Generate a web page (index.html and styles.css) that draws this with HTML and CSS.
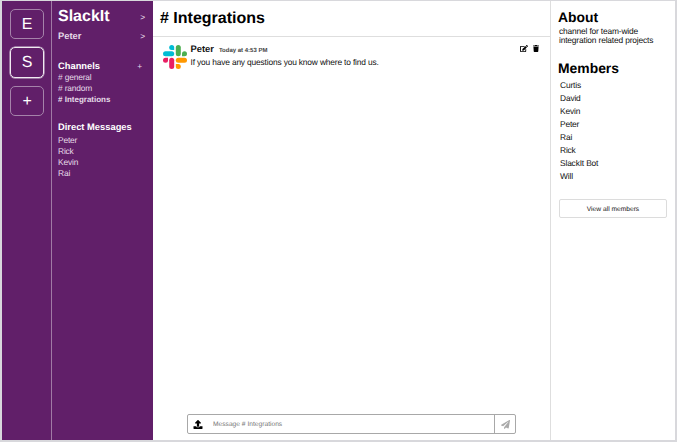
FILE: index.html
```html
<!DOCTYPE html>
<html lang="en">
<head>
<meta charset="utf-8">
<title>SlackIt</title>
<link rel="stylesheet" href="styles.css">
</head>
<body>
<div class="app">
  <nav class="workspaces">
    <div class="workspace">E</div>
    <div class="workspace active">S</div>
    <div class="workspace add">+</div>
  </nav>
  <aside class="sidebar">
    <div class="row team"><h1>SlackIt</h1><span>&gt;</span></div>
    <div class="row user"><h2>Peter</h2><span>&gt;</span></div>
    <div class="row channels-title"><h2>Channels</h2><span>+</span></div>
    <ul class="channels">
      <li># general</li>
      <li># random</li>
      <li class="current"># Integrations</li>
    </ul>
    <h2 class="dm-title">Direct Messages</h2>
    <ul class="dms">
      <li>Peter</li>
      <li>Rick</li>
      <li>Kevin</li>
      <li>Rai</li>
    </ul>
  </aside>
  <main class="chat">
    <header class="chat-header"><h1># Integrations</h1></header>
    <section class="messages">
      <article class="message">
        <svg class="avatar" viewBox="0 0 24 24">
          <g fill="#00bcd4"><rect x="0" y="6.200" width="11.200" height="5" rx="2.500"/><path d="M11.200 5H8.700A2.500 2.500 0 1 1 11.200 2.500Z"/></g>
          <g fill="#4caf50"><rect x="12.800" y="0" width="5" height="11.200" rx="2.500"/><path d="M19 11.200V8.700A2.500 2.500 0 1 1 21.500 11.200Z"/></g>
          <g fill="#ff9800"><rect x="12.800" y="12.800" width="11.200" height="5" rx="2.500"/><path d="M12.800 19h2.500A2.500 2.500 0 1 1 12.800 21.500Z"/></g>
          <g fill="#e91e63"><rect x="6.200" y="12.800" width="5" height="11.200" rx="2.500"/><path d="M5 12.800V15.300A2.500 2.500 0 1 1 2.500 12.800Z"/></g>
        </svg>
        <div class="message-body">
          <div class="byline"><b>Peter</b><time>Today at 4:53 PM</time></div>
          <p>If you have any questions you know where to find us.</p>
        </div>
        <div class="actions">
          <svg class="edit" viewBox="0 0 576 512"><path d="M402.600 83.200l90.200 90.200c3.800 3.800 3.800 10 0 13.800L274.400 405.600l-92.800 10.300c-12.400 1.400-22.900-9.100-21.500-21.500l10.300-92.800L388.800 83.200c3.800-3.800 10-3.800 13.800 0zm162-22.900l-48.800-48.800c-15.200-15.200-39.900-15.200-55.200 0l-35.400 35.400c-3.800 3.800-3.800 10 0 13.800l90.200 90.200c3.800 3.800 10 3.800 13.800 0l35.400-35.400c15.200-15.300 15.200-40 0-55.200zM384 346.200V448H64V128h229.800c3.200 0 6.200-1.300 8.500-3.500l40-40c7.600-7.600 2.200-20.500-8.500-20.500H48C21.500 64 0 85.500 0 112v352c0 26.500 21.500 48 48 48h352c26.500 0 48-21.500 48-48V306.200c0-10.700-12.900-16-20.500-8.500l-40 40c-2.200 2.300-3.500 5.300-3.500 8.500z"/></svg>
          <svg class="trash" viewBox="0 0 448 512"><path d="M432 32H312l-9.400-18.700A24 24 0 0 0 281.100 0H166.800a24 24 0 0 0-21.400 13.300L136 32H16A16 16 0 0 0 0 48v32a16 16 0 0 0 16 16h416a16 16 0 0 0 16-16V48a16 16 0 0 0-16-16zM53.200 467a48 48 0 0 0 47.900 45h245.800a48 48 0 0 0 47.900-45L416 128H32z"/></svg>
        </div>
      </article>
    </section>
    <form class="composer">
      <svg class="upload" viewBox="0 0 512 512"><path d="M296 384h-80c-13.300 0-24-10.700-24-24V192h-87.700c-17.800 0-26.700-21.500-14.100-34.100L242.300 5.700c7.500-7.500 19.800-7.500 27.300 0l152.200 152.200c12.600 12.600 3.700 34.100-14.100 34.100H320v168c0 13.300-10.700 24-24 24zm216-8v112c0 13.300-10.700 24-24 24H24c-13.300 0-24-10.700-24-24V376c0-13.300 10.700-24 24-24h136v8c0 30.900 25.100 56 56 56h80c30.900 0 56-25.100 56-56v-8h136c13.300 0 24 10.700 24 24z"/></svg>
      <input type="text" placeholder="Message # Integrations">
      <div class="send"><svg viewBox="0 0 512 512"><path d="M476 3.200L12.500 270.600c-18.100 10.400-15.800 35.600 2.200 43.200L121 358.400l287.300-253.200c5.500-4.900 13.300 2.600 8.600 8.300L176 407v80.500c0 23.600 28.500 32.900 42.500 15.800L282 426l124.600 52.200c14.200 6 30.400-2.900 33-18.200l72-432C515 7.800 493.300-6.800 476 3.200z"/></svg></div>
    </form>
  </main>
  <aside class="details">
    <h2>About</h2>
    <p>channel for team-wide<br>integration related projects</p>
    <h2 class="members-title">Members</h2>
    <ul class="members">
      <li>Curtis</li>
      <li>David</li>
      <li>Kevin</li>
      <li>Peter</li>
      <li>Rai</li>
      <li>Rick</li>
      <li>SlackIt Bot</li>
      <li>Will</li>
    </ul>
    <button type="button">View all members</button>
  </aside>
</div>
</body>
</html>
```
FILE: styles.css
```css
* { box-sizing: border-box; margin: 0; padding: 0; }
body {
  height: 442px;
  padding: 1px 2px 2px;
  background: #d8d8dc;
  font-family: "Liberation Sans", Arial, sans-serif;
  font-size: 8.400px;
  letter-spacing: -0.160px;
  text-rendering: geometricPrecision;
  color: #111;
  overflow: hidden;
}
ul { list-style: none; }
.app {
  display: grid;
  grid-template-columns: 49px 102px 397px 1fr;
  height: 439px;
  background: #fff;
}
.workspaces {
  display: flex;
  flex-direction: column;
  align-items: center;
  gap: 8px;
  padding: 8px 0 0 1px;
  background: #611f69;
  color: #fff;
}
.workspace {
  width: 34px;
  height: 30px;
  border: 1px solid #a583aa;
  border-radius: 5px;
  font-size: 16px;
  line-height: 29px;
  text-align: center;
}
.workspace.active { height: 31px; border: 1px solid #f0eaf1; box-shadow: 0 0 0 0.500px #d8cbdb; line-height: 29px; }
.sidebar {
  padding: 7px 8px 0 6px;
  border-left: 1px solid #a07aa5;
  background: #611f69;
  color: #e6dbe8;
}
.sidebar h1, .sidebar h2 { color: #fff; }
h1 { font-size: 16px; line-height: 18px; letter-spacing: 0; }
.sidebar h2 { font-size: 9.350px; line-height: 12px; letter-spacing: 0; }
.row { display: flex; justify-content: space-between; align-items: center; }
.sidebar .user { margin-top: 4px; }
.sidebar .user h2 { color: #e6dbe8; }
.channels-title { margin-top: 18px; }
.channels-title span { margin-right: 3px; }
.channels li, .dms li { line-height: 11px; }
.channels .current { font-size: 8px; letter-spacing: 0; font-weight: bold; }
.dm-title { margin-top: 16px; }
.dms { margin-top: 2px; }
.chat { display: flex; flex-direction: column; }
.chat-header {
  height: 36px;
  padding: 9px 7px 0;
  border-bottom: 1px solid #dedede;
  color: #000;
}
.messages { flex: 1; padding: 8px 11px 0 9.500px; }
.message { display: flex; }
.avatar { width: 24px; height: 24px; }
.message-body { flex: 1; padding-left: 4px; margin-top: -1px; }
.byline { display: flex; align-items: baseline; gap: 5px; font-size: 9.350px; line-height: 11px; letter-spacing: 0; }
.byline time { font-size: 6px; font-weight: bold; color: #444; }
.message p { line-height: 11px; }
.actions { display: flex; gap: 5px; }
.edit { width: 8px; height: 7px; }
.trash { width: 6px; height: 7px; }
.composer {
  display: flex;
  align-items: center;
  width: 329px;
  height: 20px;
  margin: 0 0 6px 34px;
  border: 1px solid #a8a8a8;
  border-radius: 2px;
}
.upload { width: 10px; height: 9px; margin-left: 5px; }
.composer input {
  flex: 1;
  height: 18px;
  padding-left: 10px;
  border: 0;
  background: transparent;
  font: 6.670px "Liberation Sans", Arial, sans-serif;
  text-rendering: geometricPrecision;
}
.composer input::placeholder { color: #777; }
.send {
  display: flex;
  align-items: center;
  justify-content: center;
  width: 21px;
  height: 18px;
  border-left: 1px solid #a8a8a8;
}
.send svg { width: 9px; height: 9px; fill: #aaa; }
.details { padding: 8px 8px 0 7px; border-left: 1px solid #dedede; }
.details h2 { font-size: 13.900px; line-height: 17px; letter-spacing: 0; color: #000; }
.details p { padding-left: 1px; padding-top: 1px; line-height: 9px; }
.details .members-title { margin-top: 15px; }
.members { padding: 2px 0 0 2px; }
.members li { line-height: 13px; }
.details button {
  display: block;
  width: 108px;
  height: 19px;
  margin: 16px 0 0 1px;
  padding-top: 1px;
  border: 1px solid #dcdcdc;
  border-radius: 2px;
  background: #fff;
  font: 6.670px "Liberation Sans", Arial, sans-serif;
  text-rendering: geometricPrecision;
  color: #111;
}
```
